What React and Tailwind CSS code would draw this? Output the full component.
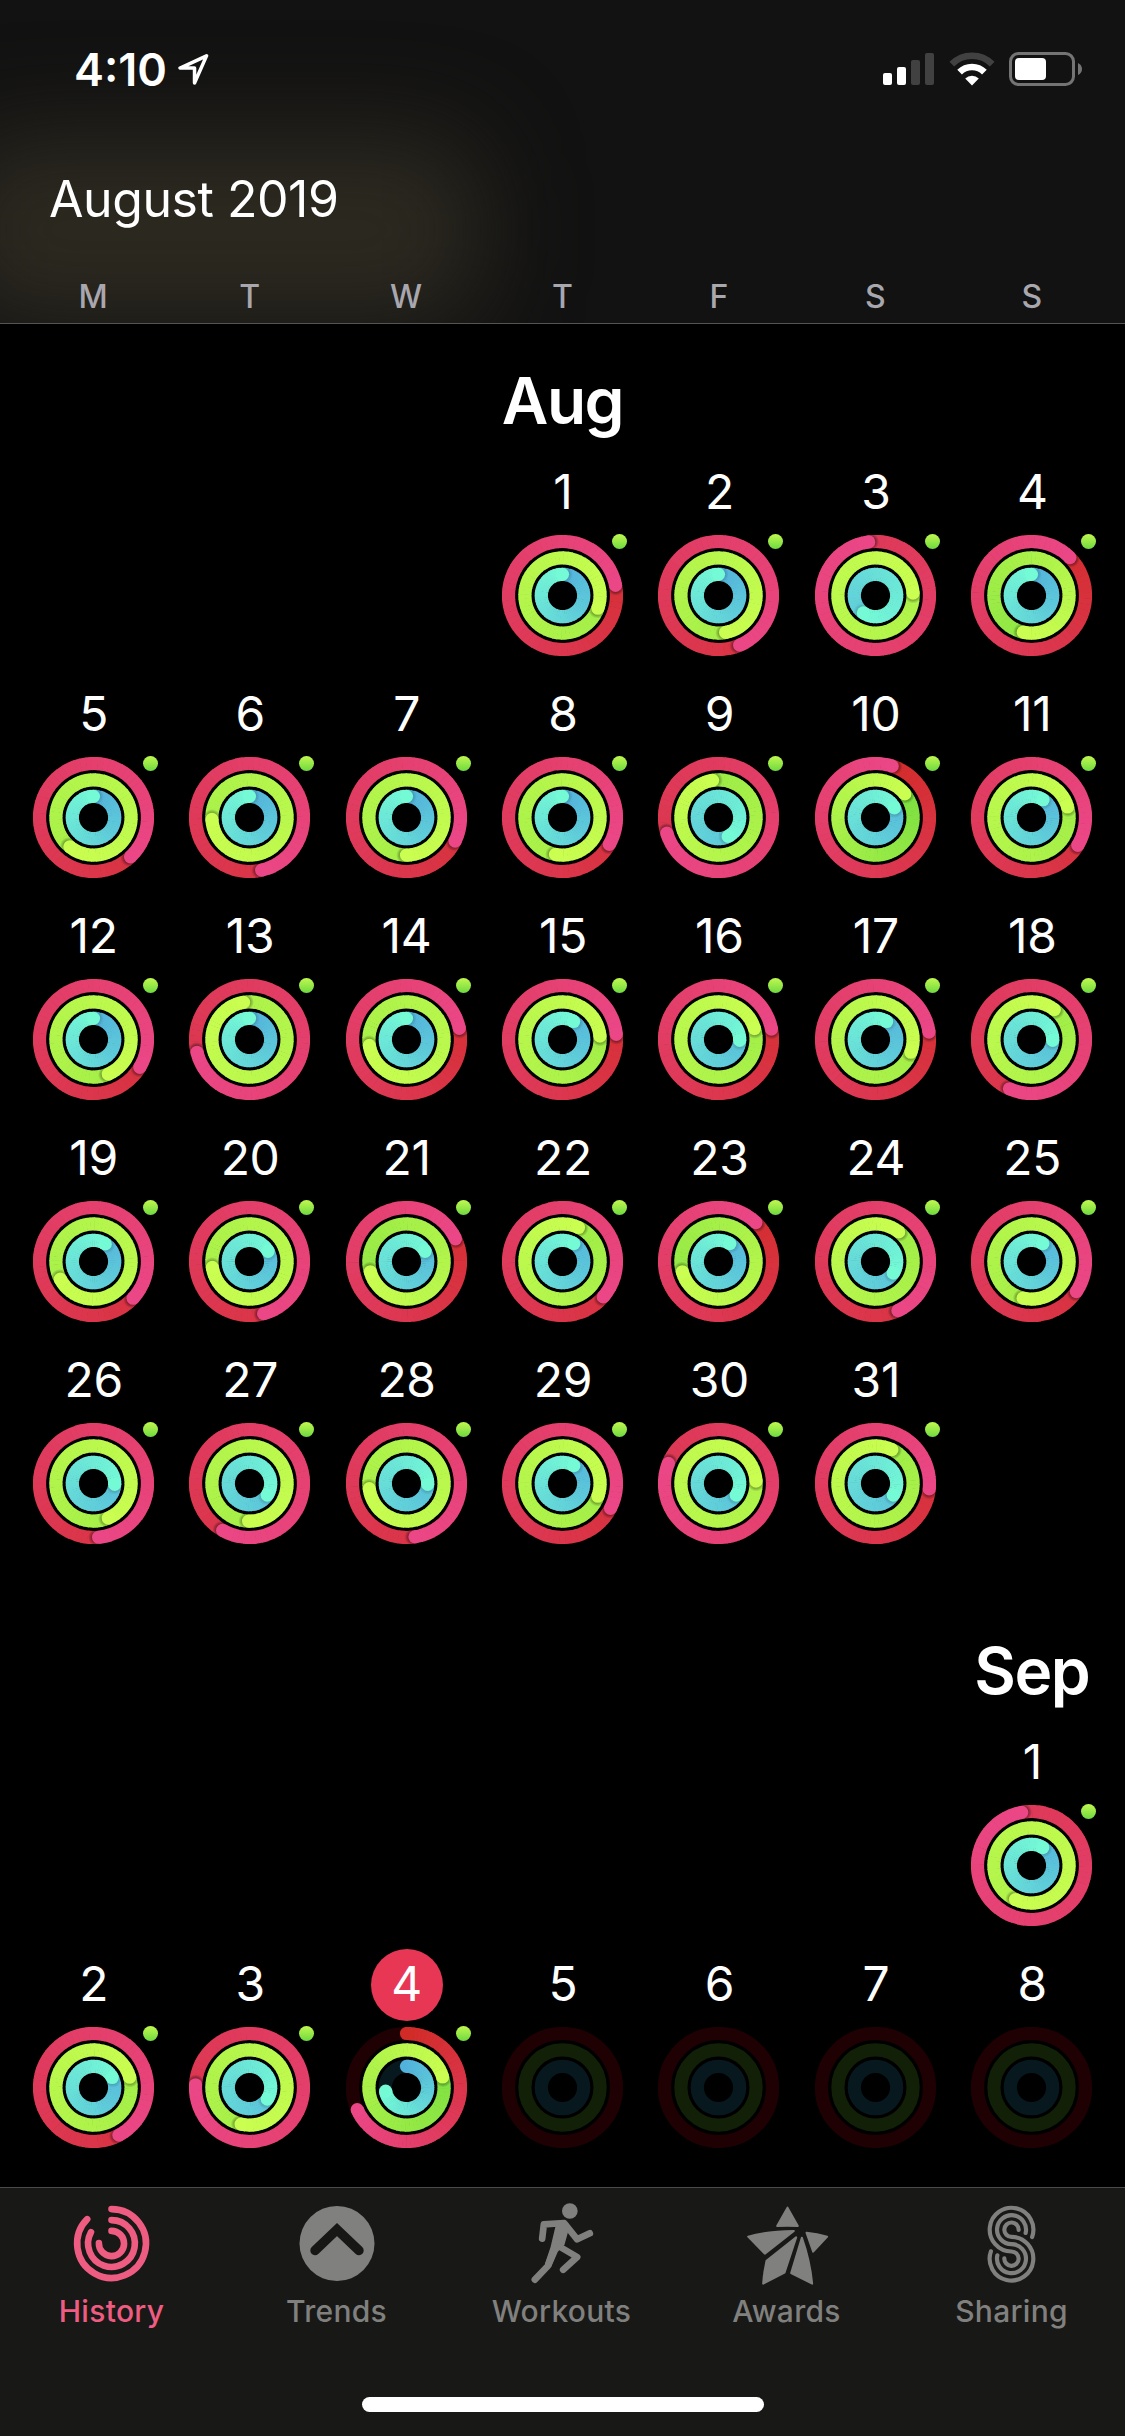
import clsx from 'clsx'

const WEEKDAYS = ['M', 'T', 'W', 'T', 'F', 'S', 'S']

// laps completed per ring: [move, exercise, stand]
const AUGUST = [
  { day: 1, rings: [1.22, 2.305, 1] },
  { day: 2, rings: [1.436, 2.47, 1] },
  { day: 3, rings: [1.98, 3.24, 1.597] },
  { day: 4, rings: [1.126, 1.535, 1] },
  { day: 5, rings: [1.38, 2.608, 1] },
  { day: 6, rings: [1.464, 2.742, 1] },
  { day: 7, rings: [1.322, 2.5, 1] },
  { day: 8, rings: [1.333, 2.53, 1] },
  { day: 9, rings: [1.703, 1.975, 1.425] },
  { day: 10, rings: [1.05, 1.142, 1.175] },
  { day: 11, rings: [1.336, 2.205, 1.092] },
  { day: 12, rings: [1.336, 2.436, 1] },
  { day: 13, rings: [1.712, 2.975, 1] },
  { day: 14, rings: [1.217, 2.725, 1] },
  { day: 15, rings: [1.235, 2.236, 1.088] },
  { day: 16, rings: [1.219, 2.203, 1.256] },
  { day: 17, rings: [1.228, 2.305, 1.088] },
  { day: 18, rings: [1.567, 2.104, 1.256] },
  { day: 19, rings: [1.369, 2.672, 1.094] },
  { day: 20, rings: [1.458, 2.725, 1.17] },
  { day: 21, rings: [1.181, 1.706, 1.17] },
  { day: 22, rings: [1.364, 2.07, 1.09] },
  { day: 23, rings: [1.122, 1.706, 1.09] },
  { day: 24, rings: [1.432, 2.106, 1.342] },
  { day: 25, rings: [1.344, 2.536, 1.09] },
  { day: 26, rings: [1.485, 2.436, 1.256] },
  { day: 27, rings: [1.583, 2.504, 1.342] },
  { day: 28, rings: [1.475, 2.728, 1.256] },
  { day: 29, rings: [1.326, 2.305, 1.09] },
  { day: 30, rings: [1.811, 3.24, 1.342] },
  { day: 31, rings: [1.266, 2.072, 1.342] },
]

const SEPTEMBER = [
  { day: 1, rings: [1.971, 3.57, 1.089] },
  { day: 2, rings: [1.422, 2.206, 1.172] },
  { day: 3, rings: [1.758, 2.536, 1.342] },
  { day: 4, rings: [0.683, 1.205, 0.722], today: true },
  { day: 5 },
  { day: 6 },
  { day: 7 },
  { day: 8 },
]

const RING_STYLES = [
  { r: 54, track: '#1f0104', from: [209, 43, 39], to: [235, 71, 135], shadow: 0.9 },
  { r: 37.6, track: '#112006', from: [112, 219, 62], to: [202, 254, 80], shadow: 0.7 },
  { r: 21.2, track: '#07191f', from: [83, 178, 220], to: [117, 250, 214], shadow: 0.35 },
]

const STROKE = 13.2
const SEGMENTS = 60

function mix(from, to, t) {
  return `rgb(${from.map((c, i) => Math.round(c + (to[i] - c) * t)).join(',')})`
}

function point(r, laps) {
  const a = laps * Math.PI * 2
  return [Math.sin(a) * r, -Math.cos(a) * r]
}

function arc(r, a, b) {
  const [x1, y1] = point(r, a)
  const [x2, y2] = point(r, b)
  return `M${x1.toFixed(2)} ${y1.toFixed(2)}A${r} ${r} 0 0 1 ${x2.toFixed(2)} ${y2.toFixed(2)}`
}

function Ring({ r, track, from, to, shadow, value }) {
  if (!value) return <circle r={r} fill="none" stroke={track} strokeWidth={STROKE} />

  // only the last lap is visible, the colour still runs over all the laps
  const start = Math.max(0, value - 1)
  const step = (value - start) / SEGMENTS
  const overlap = 0.6 / (2 * Math.PI * r)
  const segments = Array.from({ length: SEGMENTS }, (_, i) => {
    const a = start + i * step
    return (
      <path
        key={i}
        d={arc(r, a - (i ? overlap : 0), a + step)}
        stroke={mix(from, to, (a + step / 2) / value)}
        strokeWidth={STROKE}
        fill="none"
      />
    )
  })
  const [sx, sy] = point(r, start)
  const [ex, ey] = point(r, value)
  const [hx, hy] = point(r, value + 1.4 / (2 * Math.PI * r))

  return (
    <g>
      <circle r={r} fill="none" stroke={track} strokeWidth={STROKE} />
      {value < 1 && <circle cx={sx} cy={sy} r={STROKE / 2} fill={mix(from, to, 0)} />}
      {segments.slice(0, SEGMENTS / 2)}
      {value >= 1 && <circle cx={hx} cy={hy} r={9} fill="url(#cap-shadow)" opacity={shadow} />}
      {segments.slice(SEGMENTS / 2)}
      <circle cx={ex} cy={ey} r={STROKE / 2} fill={mix(from, to, 1)} />
    </g>
  )
}

function ActivityRings({ rings }) {
  return (
    <div className="relative mt-[6px] h-[121px] w-[121px]">
      <svg viewBox="-60.5 -60.5 121 121" className="h-full w-full">
        {RING_STYLES.map((style, i) => (
          <Ring key={style.r} {...style} value={rings?.[i]} />
        ))}
      </svg>
      {rings && (
        <span className="absolute -top-px -right-1 h-[15px] w-[15px] rounded-full bg-linear-to-b from-[#c0f850] to-[#6cd93f]" />
      )}
    </div>
  )
}

function Day({ day, rings, today }) {
  return (
    <div className="flex h-[222px] flex-col items-center pt-px">
      <div
        className={clsx(
          'ml-px flex h-[72px] w-[72px] items-center justify-center rounded-full pb-[3px] text-[48px] leading-none tracking-[-0.3px]',
          today && 'bg-[#e73755]'
        )}
      >
        {day}
      </div>
      <ActivityRings rings={rings} />
    </div>
  )
}

function Month({ name, offset, days, className }) {
  return (
    <section className={clsx('grid grid-cols-7 px-[15px]', className)}>
      {Array.from({ length: offset }, (_, i) => <div key={i} />)}
      <h2 className="flex h-[132px] items-center justify-center pt-[21px] text-[64px] leading-none font-semibold tracking-[-1.5px]">{name}</h2>
      {Array.from({ length: 6 - offset }, (_, i) => <div key={i} />)}
      {Array.from({ length: offset }, (_, i) => <div key={i} />)}
      {days.map(d => <Day key={d.day} {...d} />)}
    </section>
  )
}

function StatusBar() {
  return (
    <div className="flex h-[138px] items-center justify-between pr-[42px] pl-[74px]">
      <div className="flex items-center gap-[11px]">
        <span className="text-[45px] leading-none font-semibold">4:10</span>
        <svg viewBox="0 0 30 30" className="h-[31px] w-[31px]" fill="none" stroke="#fff" strokeWidth="3.4" strokeLinejoin="round">
          <path d="M27.6 1.8 2 13.6H16V28Z" />
        </svg>
      </div>
      <div className="flex items-center">
        <svg viewBox="0 0 51 34" className="h-[34px] w-[51px]">
          <rect x="0" y="21" width="9" height="12" rx="2" fill="#fff" />
          <rect x="14" y="15" width="9" height="18" rx="2" fill="#fff" />
          <rect x="28" y="8" width="9" height="25" rx="2" fill="#414141" />
          <rect x="42" y="1" width="9" height="32" rx="2" fill="#414141" />
        </svg>
        <svg viewBox="0 0 46 34" className="ml-[15px] h-[34px] w-[46px]" fill="none">
          <path d="M2.8 12.2A28.5 28.5 0 0 1 43.2 12.2" stroke="#414141" strokeWidth="6.6" />
          <path d="M10.6 20.2A17.5 17.5 0 0 1 35.4 20.2" stroke="#fff" strokeWidth="6.6" />
          <path d="M23 33.4 16.2 26.4A9.8 9.8 0 0 1 29.8 26.4Z" fill="#fff" />
        </svg>
        <svg viewBox="0 0 74 36" className="ml-[14px] h-[36px] w-[74px]">
          <rect x="1.5" y="2.5" width="63" height="31" rx="8" fill="none" stroke="#747474" strokeWidth="3" />
          <rect x="6" y="7" width="31" height="22" rx="4" fill="#fff" />
          <path d="M69 12q4 2 4 6t-4 6Z" fill="#747474" />
        </svg>
      </div>
    </div>
  )
}

function Header() {
  return (
    <header className="relative h-[324px] overflow-hidden border-b border-[#545454] bg-[#121212]">
      <div className="absolute top-[135px] -left-[50px] h-[190px] w-[530px] rounded-[60px] bg-[#2c2920] blur-[48px]" />
      <div className="relative">
        <StatusBar />
        <h1 className="flex h-[122px] items-center pl-[49px] text-[50px] leading-none tracking-[-0.45px]">August 2019</h1>
        <div className="grid h-[63px] grid-cols-7 items-center px-[15px] pt-[11px] text-center text-[32px] leading-none font-medium text-[#a9a7ae]">
          {WEEKDAYS.map((d, i) => <span key={i}>{d}</span>)}
        </div>
      </div>
    </header>
  )
}

function HistoryIcon() {
  return (
    <svg viewBox="-43.5 -43.5 90 90" className="h-[90px] w-[90px]" fill="none" stroke="currentColor" strokeWidth="6.6" strokeLinecap="round">
      <path d="M0 -34.4A34.4 34.4 0 1 1 -24.3 -24.3" />
      <path d="M0 -23.4A23.4 23.4 0 1 1 -20.5 -11.3" />
      <path d="M0 -12.6A12.6 12.6 0 1 1 -12.6 -0.5" />
    </svg>
  )
}

function TrendsIcon() {
  return (
    <svg viewBox="-44 -43.5 90 90" className="h-[90px] w-[90px]">
      <circle r="37.5" fill="currentColor" />
      <path d="M-22 7 0 -14 22 7" fill="none" stroke="#171716" strokeWidth="9.4" strokeLinecap="round" />
    </svg>
  )
}

function WorkoutsIcon() {
  return (
    <svg viewBox="-22.5 15 270 270" className="h-[90px] w-[90px]" fill="none" stroke="currentColor" strokeWidth="20" strokeLinecap="round" strokeLinejoin="round">
      <circle cx="133" cy="48" r="23.5" fill="currentColor" stroke="none" />
      <path d="M50 131 55 88 116 84 155 133 193 115" />
      <path d="M28 254 67 213 91 150" />
      <path d="M104 156 155 186 113 224" />
      <path d="M90 94 118 76 130 88 127 113 117 149 97 170 77 216 58 207 75 157Z" fill="currentColor" stroke="none" />
    </svg>
  )
}

function AwardsIcon() {
  return (
    <svg viewBox="652.5 15 270 270" className="h-[90px] w-[90px]" fill="currentColor" stroke="currentColor" strokeWidth="6" strokeLinejoin="round">
      <path d="M786 38 817 93Q786 92 755 93Z" />
      <path d="M668 125Q725 109 805 108L718 176Z" />
      <path d="M812 127 777 233 713 266Q715 232 723 197Z" />
      <path d="M829 128Q853 195 860 266L797 234Z" />
      <path d="M843 113Q875 116 905 125L863 170Z" />
    </svg>
  )
}

function SharingIcon() {
  return (
    <svg viewBox="1327.5 15 270 270" className="h-[90px] w-[90px]" fill="none" stroke="currentColor" strokeWidth="12.5" strokeLinecap="round">
      <path d="M1519.8 126A65.5 65.5 0 1 0 1458 169.5A21.5 21.5 0 1 1 1436.5 190" />
      <path d="M1500.4 114A43.5 43.5 0 1 0 1458 147.5A43.5 43.5 0 1 1 1415.6 181" />
      <path d="M1479.5 105A21.5 21.5 0 1 0 1458 125.5A65.5 65.5 0 1 1 1396.2 169" />
    </svg>
  )
}

const TABS = [
  { label: 'History', icon: HistoryIcon, active: true },
  { label: 'Trends', icon: TrendsIcon },
  { label: 'Workouts', icon: WorkoutsIcon },
  { label: 'Awards', icon: AwardsIcon },
  { label: 'Sharing', icon: SharingIcon },
]

function TabBar() {
  return (
    <nav className="flex h-[249px] flex-col border-t border-[#4a4a4a] bg-[#181817]">
      <div className="grid grid-cols-5 pt-3">
        {TABS.map(({ label, icon: Icon, active }) => (
          <button key={label} className={clsx('flex flex-col items-center', active ? 'text-[#ef5c82]' : 'text-[#80807e]')}>
            <Icon />
            <span className="mt-1 mr-[2px] text-[30px] leading-[34px] font-medium tracking-[0.3px]">{label}</span>
          </button>
        ))}
      </div>
      <div className="mx-auto mt-auto mb-6 h-[15px] w-[402px] rounded-full bg-white" />
    </nav>
  )
}

export default function App() {
  return (
    <div className="flex h-[2436px] w-[1125px] flex-col overflow-hidden bg-black font-['Inter','Liberation_Sans',sans-serif] text-white">
      <svg className="absolute h-0 w-0">
        <defs>
          <radialGradient id="cap-shadow">
            <stop offset="0.55" stopColor="#000" stopOpacity="0.5" />
            <stop offset="1" stopColor="#000" stopOpacity="0" />
          </radialGradient>
        </defs>
      </svg>
      <Header />
      <main className="flex-1 overflow-hidden">
        <Month name="Aug" offset={3} days={AUGUST} />
        <Month name="Sep" offset={6} days={SEPTEMBER} className="mt-7" />
      </main>
      <TabBar />
    </div>
  )
}
